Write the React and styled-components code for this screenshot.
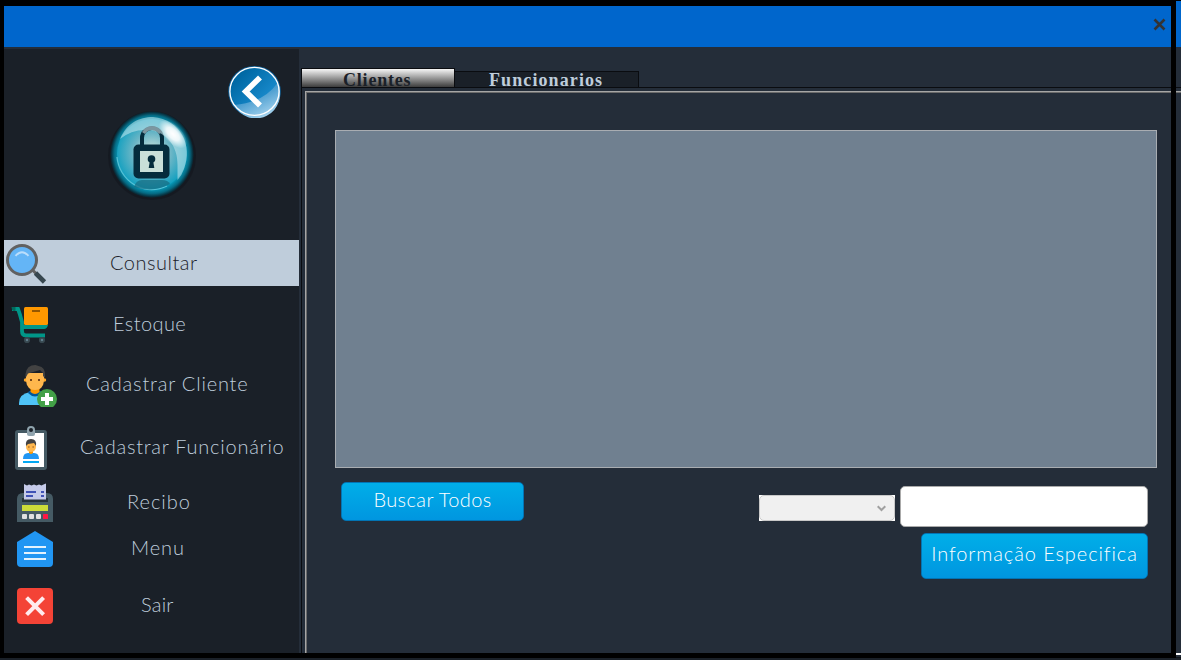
import React from 'react';
import styled, { createGlobalStyle } from 'styled-components';

const Global = createGlobalStyle`
  * { box-sizing: border-box; }
  body { margin: 0; background: #1a2028; overflow: hidden; }
  svg { display: block; flex: none; }
  button, input { font: inherit; margin: 0; padding: 0; outline: none; }
`;

const Desktop = styled.div`
  display: grid;
  grid-template-columns: 1176px 5px;
  width: 1181px;
  height: 660px;
  background: #1a2028;
  font-family: Lato, "Liberation Sans", sans-serif;
`;
const Window = styled.div`
  height: 658px;
  border: solid #000;
  border-width: 6px 5px 5px 4px;
  display: flex;
  flex-direction: column;
  background: #242d39;
`;
const Behind = styled.div`
  height: 658px;
  border-top: 1px solid #000;
  border-bottom: 1px solid #10141a;
  background: #242d39;
  display: flex;
  flex-direction: column;
`;
const BehindTitle = styled.div`height: 46px; background: #0066cc;`;
const BehindPage = styled.div`
  margin-top: 40px;
  padding-top: 3px;
  border-top: 1px solid #0a0c10;
  height: 568px;
  display: flex;
`;
const BehindPanel = styled.div`
  flex: 1;
  border-top: 1px solid #a6a6a6;
  border-bottom: 2px solid #fff;
  box-shadow: inset 0 1px #6b6b6b;
`;
const TitleBar = styled.header`
  height: 41px;
  flex: none;
  background: #0066cc;
  display: flex;
  justify-content: flex-end;
  align-items: flex-start;
  padding: 12px 5px 0 0;
`;
const Body = styled.div`flex: 1; display: flex; min-height: 0;`;
const Sidebar = styled.aside`
  width: 295px;
  margin-top: 2px;
  background: #1a2028;
  display: flex;
  flex-direction: column;
`;
const Brand = styled.div`
  height: 191px;
  display: flex;
  align-items: flex-start;
  padding: 59px 0 0 101px;
`;
const Back = styled.svg`margin: -44px 0 0 29px;`;
const NavRow = styled.a`
  height: ${p => p.$h}px;
  margin-bottom: ${p => p.$gap || 0}px;
  display: flex;
  align-items: center;
  background: ${p => (p.$active ? '#bfcddb' : 'transparent')};
  color: ${p => (p.$active ? '#1a2028' : '#bfcddb')};
`;
const Label = styled.span`
  margin-left: ${p => p.$x}px;
  padding-bottom: 2px;
  font-size: 20px;
  font-weight: 300;
  line-height: 24px;
  white-space: nowrap;
  letter-spacing: ${p => p.$track}px;
`;
const Content = styled.main`
  flex: 1;
  min-width: 0;
  padding: 21px 0 0 2px;
  display: flex;
  flex-direction: column;
`;
const Tabs = styled.div`height: 19px; display: flex; align-items: flex-end;`;
const Tab = styled.div`
  width: ${p => p.$w}px;
  height: ${p => (p.$active ? 19 : 16)}px;
  border: 1px solid #0a0c10;
  border-width: 1px 1px 0 ${p => (p.$active ? 1 : 0)}px;
  background: ${p => (p.$active ? 'linear-gradient(#f6f6f6, #3c3c3c)' : '#1a2028')};
  color: ${p => (p.$active ? '#1a2028' : '#bfcddb')};
  font: bold 18px/18px "Liberation Serif", serif;
  letter-spacing: ${p => p.$track}px;
  padding: ${p => (p.$active ? 3 : 0)}px 0 0 ${p => p.$pad}px;
  display: flex;
  align-items: center;
  white-space: nowrap;
`;
const TabPage = styled.div`
  flex: 1;
  border: solid #0a0c10;
  border-width: 1px 0 0 1px;
  padding: 3px 0 0 3px;
  display: flex;
`;
const Panel = styled.section`
  flex: 1;
  border: solid #a6a6a6;
  border-width: 1px 0 0 1px;
  box-shadow: inset 1px 1px #6b6b6b;
  padding: 38px 14px 0 29px;
`;
const DataGrid = styled.div`
  height: 338px;
  background: #708090;
  border: 1px solid #a9adb2;
`;
const Controls = styled.div`
  display: flex;
  justify-content: space-between;
  align-items: flex-start;
  padding: 14px 9px 0 6px;
`;
const Search = styled.div`
  display: flex;
  flex-direction: column;
  align-items: flex-end;
  gap: 6px;
  padding-top: 4px;
`;
const Fields = styled.div`display: flex; gap: 5px; align-items: center;`;
const Action = styled.button`
  width: ${p => p.$w}px;
  height: ${p => p.$h}px;
  border: 1px solid #0274b4;
  border-radius: 5px;
  background: linear-gradient(#00aee8, #0096e0);
  color: #fff;
  font-size: 20px;
  font-weight: 300;
  line-height: 24px;
  padding-bottom: ${p => p.$lift}px;
  letter-spacing: ${p => p.$track}px;
  white-space: nowrap;
`;
const SelectFrame = styled.div`
  width: 136px;
  height: 26px;
  margin-top: 3px;
  background: #fff;
`;
const SelectBox = styled.div`
  height: 26px;
  border: 1px solid #c8c8c8;
  border-radius: 5px;
  background: #f0f0f0;
  display: flex;
  align-items: center;
  justify-content: flex-end;
  padding-right: 8px;
`;
const TextField = styled.input`
  width: 248px;
  height: 41px;
  border: 1px solid #aaa;
  border-radius: 5px;
  background: #fff;
`;

const LockLogo = () => (
  <svg width="94" height="94" viewBox="105 108 94 94">
    <defs>
      <radialGradient id="rim">
        <stop offset="0.8" stopColor="#079ab9" />
        <stop offset="0.9" stopColor="#056a83" />
        <stop offset="0.97" stopColor="#08303e" />
        <stop offset="1" stopColor="#141a21" />
      </radialGradient>
      <radialGradient id="glass" cx="0.5" cy="0.48" r="0.55">
        <stop offset="0" stopColor="#d3e6dc" />
        <stop offset="0.5" stopColor="#6bb6c6" />
        <stop offset="1" stopColor="#079dbf" />
      </radialGradient>
      <radialGradient id="shine">
        <stop offset="0" stopColor="#fff" />
        <stop offset="0.45" stopColor="#fff" stopOpacity="0.85" />
        <stop offset="1" stopColor="#fff" stopOpacity="0" />
      </radialGradient>
    </defs>
    <circle cx="152" cy="156" r="44" fill="#12161c" opacity="0.6" />
    <ellipse cx="152" cy="154.5" rx="42" ry="43.5" fill="url(#rim)" />
    <circle cx="152" cy="154" r="35" fill="url(#glass)" />
    <path d="M117 157A35 36 0 0 0 167 186" fill="none" stroke="#55c0d5" strokeWidth="1.3" />
    <path d="M134 187q2-7 8-7h20q6 0 8 4q-16 9-36 3" fill="#176b80" opacity="0.7" />
    <path d="M142 147v-9a10 10 0 0 1 20 0v9" fill="none" stroke="#052c3c" strokeWidth="4" />
    <path d="M120 139C127 123 139 117 153 117C181 120 193 145 184 169Q182 175 177.500 180V165C178 146 166 131 148 130Q132 129 120 139z" fill="#c8e9ef" opacity="0.55" />
    <ellipse cx="173" cy="134" rx="18" ry="9" transform="rotate(46 173 134)" fill="url(#shine)" />
    <path d="M143.500 133a10 10 0 0 1 17 0" fill="none" stroke="#7c969f" strokeWidth="3.600" />
    <rect x="133.500" y="144.500" width="36" height="34" rx="5" fill="#052c3c" />
    <rect x="140" y="151" width="23" height="21" fill="#c9dfd8" />
    <circle cx="151.500" cy="159" r="3.800" fill="#052c3c" />
    <path d="M150 160h3l1.300 8h-5.600z" fill="#052c3c" />
  </svg>
);

const BackIcon = () => (
  <Back width="54" height="54" viewBox="228 64 54 54">
    <defs>
      <linearGradient id="back" x1="0" y1="0" x2="1" y2="1">
        <stop offset="0.2" stopColor="#0069a5" />
        <stop offset="0.65" stopColor="#1687c8" />
      </linearGradient>
      <linearGradient id="backLow" x1="0.3" y1="0.2" x2="0.8" y2="1">
        <stop offset="0" stopColor="#2386c2" />
        <stop offset="1" stopColor="#b4dcf4" />
      </linearGradient>
    </defs>
    <ellipse cx="254.500" cy="91.400" rx="26.300" ry="25.500" fill="#0f6099" />
    <ellipse cx="254.500" cy="91.400" rx="24.600" ry="24" fill="url(#back)" />
    <path d="M234 105Q263 103 277.500 83A24 24 0 0 1 234 105z" fill="url(#backLow)" />
    <ellipse cx="254.500" cy="91.400" rx="24.600" ry="24" fill="none" stroke="#fff" strokeWidth="1.400" />
    <path d="M260 77.500L245.700 91.500L260 105.500" fill="none" stroke="#fff" strokeWidth="5.600" />
  </Back>
);

const SearchIcon = () => (
  <svg width="58" height="46" viewBox="4 240 58 46">
    <path d="M32 269.500l4 4" stroke="#616161" strokeWidth="3" />
    <path d="M35.500 273l9 9" stroke="#37474f" strokeWidth="4.600" />
    <circle cx="22" cy="260" r="14.500" fill="#64b5f6" stroke="#616161" strokeWidth="3" />
    <path d="M15.500 255.800q6.500-7.200 13 0" fill="none" stroke="#bbdefb" strokeWidth="2" />
  </svg>
);
const CartIcon = () => (
  <svg width="58" height="60" viewBox="4 294 58 60">
    <path d="M12 309h6q2 5 4 13v9q0 4.500 4 4.500h19" fill="none" stroke="#009688" strokeWidth="3.800" />
    <path d="M22 325h26q-1 4-4 4H22z" fill="#009688" />
    <path d="M11.500 307h4v4h-2q-2-1-2-4" fill="#00695c" />
    <rect x="24" y="307" width="24" height="18" rx="1.500" fill="#ff9800" />
    <path d="M32 311h8" stroke="#8a5000" strokeWidth="1.800" />
    <circle cx="27" cy="340" r="2.200" fill="#607d8b" stroke="#37474f" strokeWidth="1.800" />
    <circle cx="42" cy="340" r="2.200" fill="#607d8b" stroke="#37474f" strokeWidth="1.800" />
  </svg>
);
const AddUserIcon = () => (
  <svg width="58" height="60" viewBox="4 354 58 60">
    <path d="M19 405v-2q0-9 11-11h10q8 1 9 9v4z" fill="#4fc3f7" />
    <path d="M28 393q7 7 14 0l-1-2H29z" fill="#01579b" />
    <path d="M30.500 385h9v7q-4.500 4-9 0z" fill="#ff9800" />
    <circle cx="25.500" cy="380" r="1.700" fill="#ffa726" />
    <circle cx="44.500" cy="380" r="1.700" fill="#ffa726" />
    <path d="M26 373h18v8q-1 9-9 9t-9-9z" fill="#ffb74d" />
    <path d="M25.500 378v-4q1-9 10-9l3 1q7 1 6.500 10v2l-2-2v-3l-3-3l-12 3.500z" fill="#424242" />
    <path d="M30 380h2M38 380h2" stroke="#784719" strokeWidth="2" />
    <svg x="37" y="389" width="20" height="18" viewBox="0 0 20 18">
      <circle cx="10" cy="10" r="10" fill="#43a047" />
      <path d="M10 4v12M4 10h12" stroke="#fff" strokeWidth="4" />
    </svg>
  </svg>
);
const BadgeIcon = () => (
  <svg width="58" height="60" viewBox="4 417 58 60">
    <rect x="15" y="430" width="32" height="40" rx="3" fill="#455a64" />
    <path d="M18 433h26v34H18z" fill="#fff" />
    <path d="M27 430a4 4 0 0 1 8 0v4q0 2-2 2h-4q-2 0-2-2z" fill="#90a4ae" />
    <circle cx="31" cy="430" r="2" fill="#1a2028" />
    <path d="M23 459q0-6 5-6h6q5 0 5 6z" fill="#2196f3" />
    <path d="M29 449h4v4q-2 2-4 0z" fill="#ff9800" />
    <ellipse cx="31" cy="446.500" rx="5" ry="5.500" fill="#ffb74d" />
    <path d="M26 446q-1-7 5-7t5 7l-2-3l-6 1z" fill="#424242" />
    <path d="M28.200 447h1.300M32.500 447h1.300" stroke="#784719" />
    <path d="M23 462h16" stroke="#03a9f4" strokeWidth="2" />
  </svg>
);
const ReceiptIcon = () => (
  <svg width="58" height="46" viewBox="4 479 58 46">
    <path d="M17 522v-23q0-6 6-6h24q6 0 6 6v23z" fill="#455a64" />
    <path d="M22 498h26v4H22z" fill="#263238" />
    <path d="M24 484l3 1.600l2-1.200l2.500 1.200l2.500-1.200l2.500 1.200l2.500-1.200l2.500 1.200l2-1.200l2.500-.8v16H24z" fill="#c5cae9" />
    <path d="M26 492h10M41 492h3M26 496h7M41 496h3" stroke="#3f51b5" strokeWidth="2" />
    <path d="M22 505h26v6H22z" fill="#cddc39" />
    {[22, 29, 36].map(x => <rect key={x} x={x} y="514" width="5" height="5" rx="1" fill="#e0e0e0" />)}
    <rect x="43" y="514" width="5" height="5" rx="0.500" fill="#ff1744" />
  </svg>
);
const MenuIcon = () => (
  <svg width="58" height="46" viewBox="4 525 58 46">
    <path d="M35 531l18 11v21q0 4-4 4H21q-4 0-4-4v-21z" fill="#2196f3" />
    <path d="M24 547h22M24 553h22M24 559h22" stroke="#e3f2fd" strokeWidth="2" />
  </svg>
);
const ExitIcon = () => (
  <svg width="58" height="68" viewBox="4 571 58 68">
    <rect x="17" y="588" width="36" height="36" rx="4" fill="#f44336" />
    <path d="M26.600 597.600l17 17M43.600 597.600l-17 17" stroke="#ffebee" strokeWidth="4" />
  </svg>
);

const items = [
  { text: 'Consultar', Icon: SearchIcon, h: 46, gap: 8, x: 48, track: 0.5, active: true },
  { text: 'Estoque', Icon: CartIcon, h: 60, x: 51, track: 0.4 },
  { text: 'Cadastrar Cliente', Icon: AddUserIcon, h: 60, gap: 3, x: 24, track: 0.8 },
  { text: 'Cadastrar Funcionário', Icon: BadgeIcon, h: 60, gap: 2, x: 18, track: 0.75 },
  { text: 'Recibo', Icon: ReceiptIcon, h: 46, x: 65, track: 1 },
  { text: 'Menu', Icon: MenuIcon, h: 46, x: 69, track: 0.9 },
  { text: 'Sair', Icon: ExitIcon, h: 68, x: 79, track: 0.2 },
];

export default function App() {
  return (
    <Desktop>
      <Global />
      <Window>
        <TitleBar>
          <svg width="13" height="13" viewBox="0 0 13 13">
            <path d="M1.500 1.500l10 10M11.500 1.500l-10 10" stroke="#333" strokeWidth="2.600" />
          </svg>
        </TitleBar>
        <Body>
          <Sidebar>
            <Brand>
              <LockLogo />
              <BackIcon />
            </Brand>
            {items.map(({ text, Icon, h, gap, x, track, active }) => (
              <NavRow key={text} $h={h} $gap={gap} $active={active}>
                <Icon />
                <Label $x={x} $track={track}>{text}</Label>
              </NavRow>
            ))}
          </Sidebar>
          <Content>
            <Tabs>
              <Tab $active $w={154} $pad={41} $track={0.8}>Clientes</Tab>
              <Tab $w={184} $pad={34} $track={1.1}>Funcionarios</Tab>
            </Tabs>
            <TabPage>
              <Panel>
                <DataGrid />
                <Controls>
                  <Action $w={183} $h={39} $lift={5} $track={0.4}>Buscar Todos</Action>
                  <Search>
                    <Fields>
                      <SelectFrame>
                        <SelectBox>
                          <svg width="9" height="7" viewBox="0 0 9 7">
                            <path d="M0.700 1.200l3.800 3.800l3.800-3.800" fill="none" stroke="#a0a0a0" strokeWidth="2" />
                          </svg>
                        </SelectBox>
                      </SelectFrame>
                      <TextField />
                    </Fields>
                    <Action $w={227} $h={46} $lift={6} $track={0.9}>Informação Especifica</Action>
                  </Search>
                </Controls>
              </Panel>
            </TabPage>
          </Content>
        </Body>
      </Window>
      <Behind>
        <BehindTitle />
        <BehindPage><BehindPanel /></BehindPage>
      </Behind>
    </Desktop>
  );
}
